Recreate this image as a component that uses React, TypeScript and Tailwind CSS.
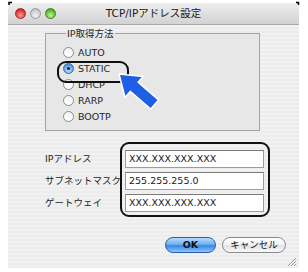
import React from "react";

const FONT = "font-['DejaVu_Sans','Noto_Sans_CJK_JP',sans-serif]";

function Radio({ label, checked }: { label: string; checked?: boolean }) {
  return (
    <div className="flex h-[16px] items-center gap-[4px]">
      {checked ? (
        <span className="flex h-[11px] w-[11px] items-center justify-center rounded-full border border-[#3a6fb8] bg-[radial-gradient(circle_at_50%_70%,#bfe0ff_0%,#6aa6ea_55%,#2f6cc8_100%)]">
          <span className="h-[3px] w-[3px] rounded-full bg-[#10203a]" />
        </span>
      ) : (
        <span className="h-[11px] w-[11px] rounded-full border border-[#8c8c8c] bg-[linear-gradient(180deg,#f4f4f4,#ffffff)]" />
      )}
      <span className="text-[9.5px] leading-none text-[#1e1e1e]">{label}</span>
    </div>
  );
}

function Field({ value }: { value: string }) {
  return (
    <div className="flex h-[18px] w-[139px] items-center border border-[#9c9c9c] border-t-[#7a7a7a] bg-white pl-[3px] text-[9.5px] leading-none text-[#1a1a1a]">
      {value}
    </div>
  );
}

export default function App() {
  return (
    <div className={`relative h-[272px] w-[308px] overflow-hidden bg-white ${FONT}`}>
      <div className="ml-[8px] mt-[3px] flex h-[265px] w-[291px] flex-col bg-[repeating-linear-gradient(180deg,#ececec_0px,#ececec_2px,#f1f1f1_2px,#f1f1f1_4px)]">
        {/* title bar */}
        <div className="grid h-[22px] grid-cols-[1fr_auto_1fr] items-center border-b border-[#a9a9a9] bg-[linear-gradient(180deg,#eeeeee,#d2d2d2)]">
          <div className="flex items-center gap-[4px] pl-[7px]">
            <span className="h-[11px] w-[11px] rounded-full border border-[#9b2a2a] bg-[radial-gradient(circle_at_50%_70%,#ff9a9a_0%,#e0383a_60%,#a81c1c_100%)]" />
            <span className="h-[11px] w-[11px] rounded-full border border-[#9a9a9a] bg-[radial-gradient(circle_at_50%_70%,#f2f2f2_0%,#d0d0d0_60%,#a8a8a8_100%)]" />
            <span className="h-[11px] w-[11px] rounded-full border border-[#3f7f22] bg-[radial-gradient(circle_at_50%_70%,#c8f59a_0%,#5ec133_60%,#2f8416_100%)]" />
          </div>
          <div className="text-[10.5px] leading-none text-[#1a1a1a]">TCP/IPアドレス設定</div>
          <div />
        </div>

        {/* content */}
        <div className="flex flex-1 flex-col pl-[37px]">
          <fieldset className="mt-[4px] h-[102px] w-[215px] border border-[#a4a4a4] bg-[#e7e7e7] px-0 pb-[4px] pl-[17px] pt-[6px]">
            <legend className="ml-[3px] px-[1px] text-[9.5px] leading-none text-[#1e1e1e]">IP取得方法</legend>
            <div className="flex flex-col">
              <Radio label="AUTO" />
              <Radio label="STATIC" checked />
              <Radio label="DHCP" />
              <Radio label="RARP" />
              <Radio label="BOOTP" />
            </div>
          </fieldset>

          <div className="mt-[19px] grid grid-cols-[80px_auto] items-center gap-y-[4px] text-[9.5px] leading-none text-[#1e1e1e]">
            <span>IPアドレス</span>
            <Field value="XXX.XXX.XXX.XXX" />
            <span>サブネットマスク</span>
            <Field value="255.255.255.0" />
            <span>ゲートウェイ</span>
            <Field value="XXX.XXX.XXX.XXX" />
          </div>

          <div className="mt-[25px] flex justify-end gap-[6px] pr-[13px]">
            <button className="h-[16px] w-[51px] rounded-full border border-[#2a5ea8] bg-[linear-gradient(180deg,#b8dcff_0%,#6fb0f2_45%,#3c86e0_55%,#8cc6ff_100%)] text-[9.5px] font-bold leading-none text-[#101010]">
              OK
            </button>
            <button className="h-[16px] w-[64px] rounded-full border border-[#8a8a8a] bg-[linear-gradient(180deg,#ffffff_0%,#f2f2f2_50%,#e2e2e2_55%,#fafafa_100%)] text-[9.5px] leading-none text-[#101010]">
              キャンセル
            </button>
          </div>
        </div>
      </div>

      {/* overlays: highlight boxes */}
      <div className="absolute left-[57px] top-[61px] h-[22px] w-[72px] rounded-[9px] border-2 border-[#111]" />
      <div className="absolute left-[120px] top-[142px] h-[75px] w-[150px] rounded-[9px] border-2 border-[#111]" />

      {/* arrow */}
      <svg className="absolute left-0 top-0" width="308" height="272" viewBox="0 0 308 272">
        <polygon
          points="119,74 143.2,76.4 138.1,82.3 158.6,99.9 150.7,109.0 130.2,91.4 125.0,97.5"
          fill="#1f5fe6"
          stroke="#ffffff"
          strokeWidth="1.5"
          strokeLinejoin="round"
        />
        {/* resize grip */}
        <g stroke="#9a9a9a" strokeWidth="1">
          <line x1="288" y1="266" x2="296" y2="258" />
          <line x1="291" y1="266" x2="296" y2="261" />
          <line x1="294" y1="266" x2="296" y2="264" />
        </g>
        {/* corner marks */}
        <path d="M9 5 V2.5 H12" stroke="#000" strokeWidth="1.5" fill="none" />
        <path d="M296 2.5 H298.5 V5" stroke="#000" strokeWidth="1.5" fill="none" />
      </svg>
    </div>
  );
}
